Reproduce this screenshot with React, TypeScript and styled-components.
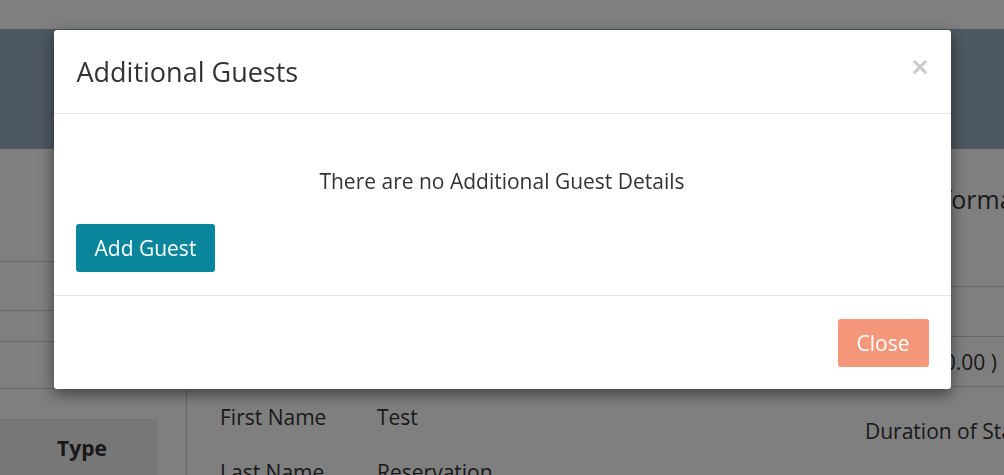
import React from 'react';
import styled, { createGlobalStyle } from 'styled-components';

const GlobalStyle = createGlobalStyle`
  html, body {
    margin: 0;
    padding: 0;
    background: #fff;
    font-family: 'Open Sans', 'Noto Sans', sans-serif;
    color: #333;
    overflow: hidden;
  }
  * { box-sizing: border-box; }
`;

const App = () => {
  return (
    <>
      <GlobalStyle />
      <Page>
        <TopBar />
        <Banner />
        <Content>
          <LeftColumn>
            <SideBlock />
            <SideRow $height={49} />
            <SideRow $height={31} />
            <SideRow $height={47} />
            <TypeHeader>Type</TypeHeader>
          </LeftColumn>
          <MiddleColumn>
            <DetailRow>
              <DetailLabel>First Name</DetailLabel>
              <DetailValue>Test</DetailValue>
            </DetailRow>
            <DetailRow>
              <DetailLabel>Last Name</DetailLabel>
              <DetailValue>Reservation</DetailValue>
            </DetailRow>
          </MiddleColumn>
          <RightColumn>
            <InfoTitle>Stay Information</InfoTitle>
            <InfoRow $height={50} />
            <InfoRow $height={50}>Total ( $0.00 )</InfoRow>
            <InfoText>Duration of Stay</InfoText>
          </RightColumn>
        </Content>
      </Page>

      <Backdrop>
        <Dialog>
          <DialogHeader>
            <DialogTitle>Additional Guests</DialogTitle>
            <CloseX aria-label="Close">×</CloseX>
          </DialogHeader>
          <DialogBody>
            <EmptyText>There are no Additional Guest Details</EmptyText>
            <Button $variant="primary">Add Guest</Button>
          </DialogBody>
          <DialogFooter>
            <Button $variant="close">Close</Button>
          </DialogFooter>
        </Dialog>
      </Backdrop>
    </>
  );
};

const Page = styled.div`
  width: 100%;
  height: 475px;
  overflow: hidden;
`;
const TopBar = styled.div`
  height: 29px;
  background: #fefefe;
`;
const Banner = styled.div`
  height: 120px;
  background: #9cb0c2;
`;
const Content = styled.div`
  display: grid;
  grid-template-columns: 187px 633px 1fr;
`;
const LeftColumn = styled.div`
  border-right: 1px solid #ccc;
  display: flex;
  flex-direction: column;
  padding-bottom: 40px;
`;
const SideBlock = styled.div`
  height: 113px;
  border-bottom: 1px solid #ccc;
`;
const SideRow = styled.div<{ $height: number }>`
  height: ${(p) => p.$height}px;
  border-bottom: 1px solid #ccc;
`;
const TypeHeader = styled.div`
  margin-top: 30px;
  width: 158px;
  height: 60px;
  background: #eee;
  font-weight: 700;
  font-size: 21px;
  display: flex;
  align-items: center;
  justify-content: center;
  padding: 0 0 3px 6px;
`;
const MiddleColumn = styled.div`
  padding: 253px 0 0 33px;
  display: flex;
  flex-direction: column;
  gap: 25px;
`;
const DetailRow = styled.div`
  display: flex;
  font-size: 21px;
  line-height: 30px;
`;
const DetailLabel = styled.span`
  width: 157px;
`;
const DetailValue = styled.span``;
const RightColumn = styled.div`
  display: flex;
  flex-direction: column;
  white-space: nowrap;
`;
const InfoTitle = styled.div`
  font-size: 25px;
  line-height: 36px;
  padding: 32px 0 0 45px;
  height: 137px;
`;
const InfoRow = styled.div<{ $height: number }>`
  height: ${(p) => p.$height}px;
  border-top: 1px solid #ccc;
  font-size: 21px;
  display: flex;
  align-items: center;
  padding-left: 46px;
`;
const InfoText = styled.div`
  border-top: 1px solid #ccc;
  font-size: 21px;
  padding: 30px 0 0 45px;
`;

const Backdrop = styled.div`
  position: fixed;
  inset: 0;
  background: rgba(0, 0, 0, 0.5);
  display: flex;
  justify-content: center;
  align-items: flex-start;
  padding-top: 30px;
`;
const Dialog = styled.div`
  width: 897px;
  background: #fff;
  border-radius: 3px;
  box-shadow: 0 5px 15px rgba(0, 0, 0, 0.5);
`;
const DialogHeader = styled.div`
  display: flex;
  justify-content: space-between;
  align-items: flex-start;
  padding: 23px 22px 23px 23px;
  border-bottom: 1px solid #e5e5e5;
`;
const DialogTitle = styled.h4`
  margin: 0;
  font-size: 27px;
  font-weight: 400;
  line-height: 37px;
  color: #333;
`;
const CloseX = styled.button`
  border: 0;
  background: none;
  padding: 0;
  font-family: 'Liberation Sans', Arial, sans-serif;
  font-size: 29px;
  font-weight: 700;
  line-height: 28px;
  color: #000;
  opacity: 0.2;
  cursor: pointer;
`;
const DialogBody = styled.div`
  padding: 22px 22px 23px 22px;
`;
const EmptyText = styled.p`
  margin: 30px 0 28px;
  text-align: center;
  font-size: 21px;
  line-height: 30px;
`;
const Button = styled.button<{ $variant: 'primary' | 'close' }>`
  border: 0;
  border-radius: 3px;
  height: 48px;
  padding: 0 19px;
  font-family: 'Open Sans', 'Noto Sans', sans-serif;
  font-size: 21px;
  color: #fff;
  background: ${(p) => (p.$variant === 'primary' ? '#0a869c' : '#f4977a')};
  cursor: pointer;
`;
const DialogFooter = styled.div`
  display: flex;
  justify-content: flex-end;
  padding: 23px 22px 22px;
  border-top: 1px solid #e5e5e5;
`;

export default App;
